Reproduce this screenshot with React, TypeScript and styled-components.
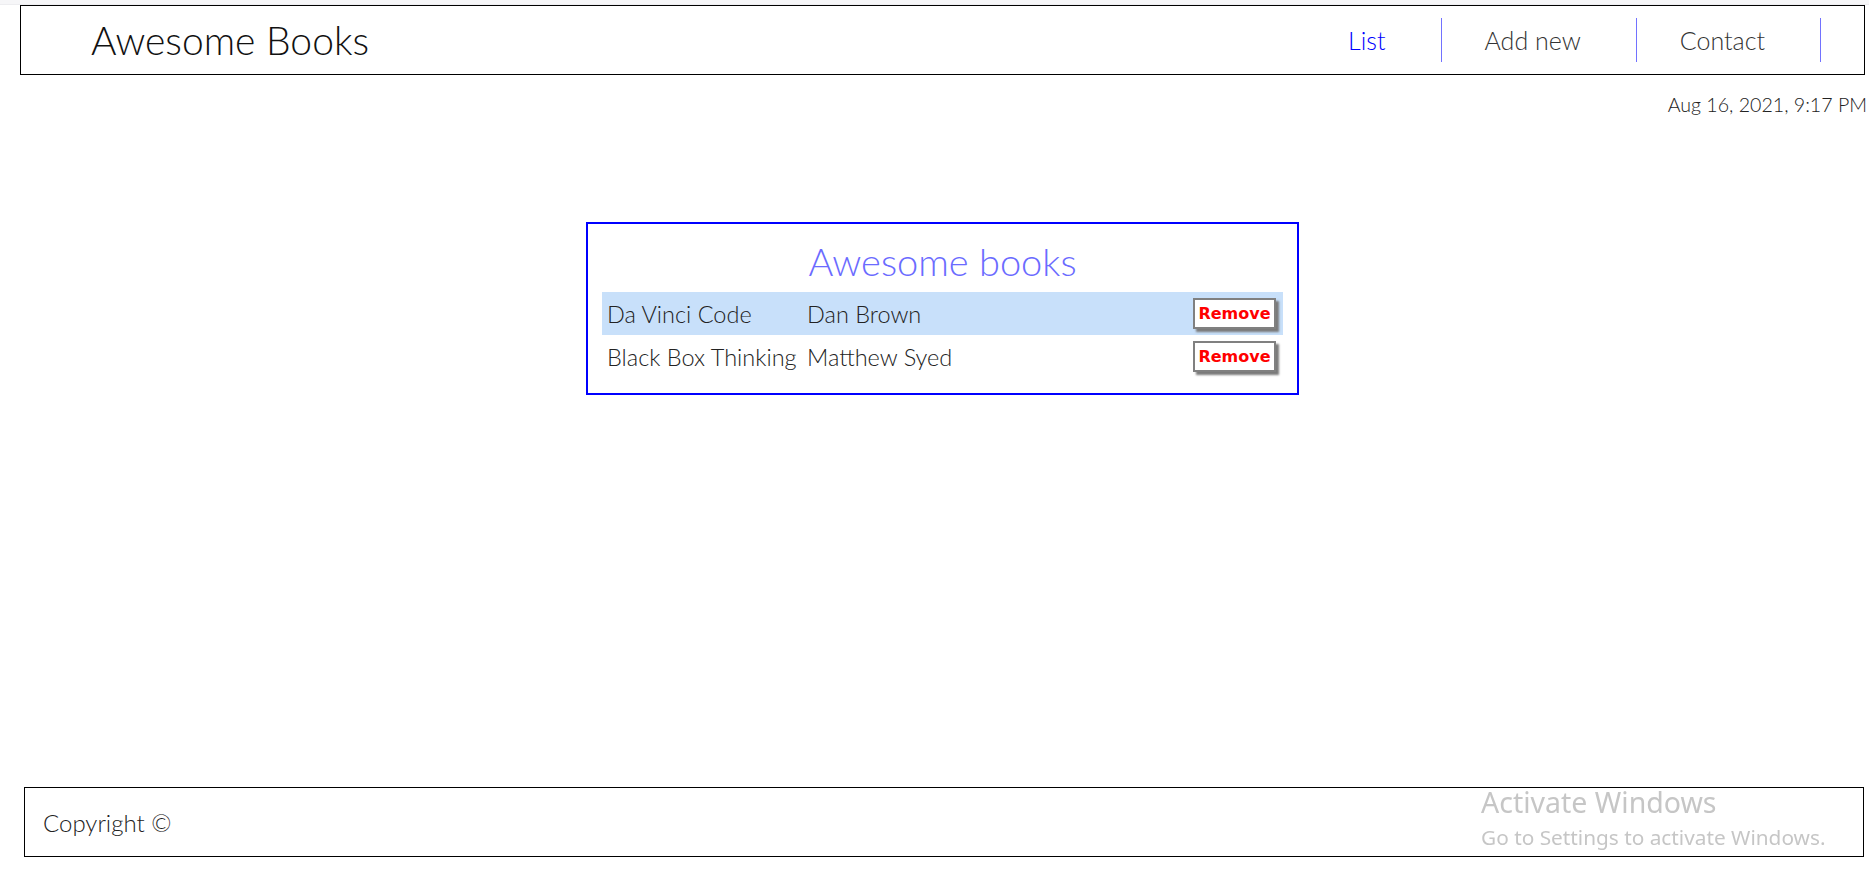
import React from 'react';
import styled, { createGlobalStyle } from 'styled-components';

const Global = createGlobalStyle`
  html, body { margin: 0; padding: 0; background: #ffffff; }
  body {
    font-family: Lato, "Liberation Sans", sans-serif;
    font-weight: 300;
    color: #222222;
  }
  * { box-sizing: border-box; }
`;

const Page = styled.div`
  min-height: 100vh;
  display: flex;
  flex-direction: column;
`;

const TopStrip = styled.div`
  height: 5px;
  background: #f6f6f8;
  border-bottom: 1px solid #ededf0;
`;

const Header = styled.header`
  margin: 0 4px 0 20px;
  height: 70px;
  border: 1px solid #000000;
  display: flex;
  align-items: center;
  justify-content: space-between;
  padding: 0 43px 0 70px;
`;

const Brand = styled.h1`
  margin: 0;
  font-size: 39px;
  font-weight: 300;
  color: #111111;
`;

const NavList = styled.ul`
  list-style: none;
  margin: 0;
  padding: 0;
  display: flex;
`;

const NavItem = styled.li<{ $active?: boolean }>`
  height: 44px;
  display: flex;
  align-items: center;
  padding: 0 55px 0 43px;
  border-right: 1px solid #7272ff;
  font-size: 25px;
  color: ${(p) => (p.$active ? '#0000ff' : '#333333')};
  cursor: pointer;
`;

const DateLine = styled.p`
  margin: 18px 2px 0 0;
  text-align: right;
  font-size: 19.6px;
  line-height: 24px;
  color: #222222;
`;

const Main = styled.main`
  flex: 1;
  display: flex;
  justify-content: center;
  align-items: flex-start;
  padding: 105px 0 0 16px;
`;

const Card = styled.section`
  width: 713px;
  border: 2px solid #0000ff;
  padding: 0 14px 15px;
`;

const CardTitle = styled.h2`
  margin: 16px 0 10px;
  text-align: center;
  font-size: 38px;
  line-height: 42px;
  font-weight: 300;
  color: #6b6bff;
`;

const BookRow = styled.div<{ $shaded?: boolean }>`
  display: grid;
  grid-template-columns: 200px 1fr auto;
  align-items: center;
  height: 43px;
  padding: 0 7px 0 5px;
  background: ${(p) => (p.$shaded ? '#c8e0fa' : 'transparent')};
  font-size: 23.5px;
  color: #222222;
  white-space: nowrap;
`;

const RemoveButton = styled.button`
  width: 83px;
  height: 31px;
  padding: 0;
  border: 2px solid #808080;
  background: #ffffff;
  color: #ff0000;
  font-family: "DejaVu Sans", Verdana, sans-serif;
  font-weight: 700;
  font-size: 16px;
  box-shadow: 3px 3px 2px #7a7a7a;
  cursor: pointer;
`;

const Footer = styled.footer`
  margin: 0 5px 17px 24px;
  height: 70px;
  border: 1px solid #000000;
  display: flex;
  align-items: center;
  padding-left: 18px;
  font-size: 24px;
  color: #222222;
`;

const Watermark = styled.div`
  position: fixed;
  left: 1481px;
  top: 785px;
  font-family: "Noto Sans", "Open Sans", sans-serif;
  font-weight: 400;
  color: #c6c6c6;
  pointer-events: none;
`;

const WatermarkTitle = styled.div`
  font-size: 28.5px;
  line-height: 34px;
`;

const WatermarkText = styled.div`
  font-size: 20.8px;
  line-height: 28px;
  margin-top: 4px;
`;

const books = [
  { title: 'Da Vinci Code', author: 'Dan Brown' },
  { title: 'Black Box Thinking', author: 'Matthew Syed' },
];

export default function App() {
  return (
    <Page>
      <Global />
      <TopStrip />
      <Header>
        <Brand>Awesome Books</Brand>
        <nav>
          <NavList>
            <NavItem $active>List</NavItem>
            <NavItem>Add new</NavItem>
            <NavItem>Contact</NavItem>
          </NavList>
        </nav>
      </Header>
      <DateLine>Aug 16, 2021, 9:17 PM</DateLine>
      <Main>
        <Card>
          <CardTitle>Awesome books</CardTitle>
          {books.map((b, i) => (
            <BookRow key={b.title} $shaded={i % 2 === 0}>
              <span>{b.title}</span>
              <span>{b.author}</span>
              <RemoveButton type="button">Remove</RemoveButton>
            </BookRow>
          ))}
        </Card>
      </Main>
      <Footer>Copyright ©</Footer>
      <Watermark>
        <WatermarkTitle>Activate Windows</WatermarkTitle>
        <WatermarkText>Go to Settings to activate Windows.</WatermarkText>
      </Watermark>
    </Page>
  );
}
